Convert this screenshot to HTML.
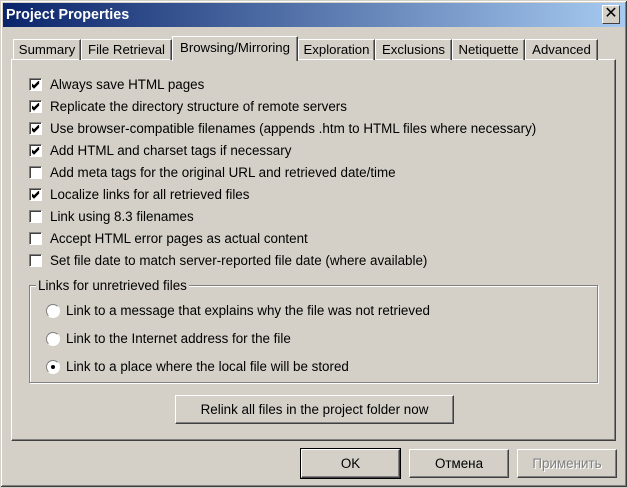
<html><head><style>
body{margin:0;width:628px;height:488px;background:#d4d0c8;font:13.4px "Liberation Sans",Arial,sans-serif;position:relative;overflow:hidden}
.a{position:absolute}
.win{left:0;top:0;width:626px;height:486px;border:1px solid #d4d0c8;box-shadow:inset -1px -1px #404040,inset 1px 1px #fff,inset -2px -2px #808080}
.title{left:3px;top:3px;width:622px;height:24px;background:linear-gradient(90deg,#0a246a,#a6caf0);color:#fff;font-weight:bold;font-size:14.3px;line-height:24px;text-indent:3px}
.close{left:602px;top:5px;width:16px;height:17px;background:#d4d0c8;border:1px solid;border-color:#fff #404040 #404040 #fff;color:#000;font-size:16px;line-height:16px;text-align:center}
.tab{top:39px;height:20px;border:1px solid;border-color:#fff #404040 transparent #fff;border-bottom:none;line-height:20px;text-align:center;color:#000;box-shadow:inset -1px 0 #808080;font-size:13.2px}
.panel{left:11px;top:59px;width:603px;height:380px;border:1px solid;border-color:#fff #404040 #404040 #fff;box-shadow:inset -1px -1px #808080}
.cb{left:29px;width:11px;height:11px;background:#fff;border:1px solid;border-color:#808080 #fff #fff #808080;box-shadow:inset 1px 1px #404040}
.cb svg{position:absolute;left:2px;top:2px}
.lbl{left:50px}
.rb{left:46px;width:12px;height:12px;border-radius:50%;background:#fff;border:1px solid;border-color:#808080 #fff #fff #808080}
.btn{height:27px;border:1px solid;border-color:#fff #404040 #404040 #fff;box-shadow:inset -1px -1px #808080;text-align:center;line-height:27px}
</style></head><body>
<div class="a win"></div>
<div class="a title">Project Properties</div>
<div class="a close">✕</div>
<div class="a panel"></div>
<div class="a tab" style="left:13px;width:66px">Summary</div>
<div class="a tab" style="left:81px;width:89px">File Retrieval</div>
<div class="a tab" style="left:298px;width:75px">Exploration</div>
<div class="a tab" style="left:375px;width:75px">Exclusions</div>
<div class="a tab" style="left:452px;width:71px">Netiquette</div>
<div class="a tab" style="left:525px;width:71px">Advanced</div>
<div class="a tab" style="left:172px;top:36px;width:124px;height:24px;background:#d4d0c8;line-height:22px">Browsing/Mirroring</div>

<div class="a cb" style="top:78px"><svg width="8" height="8"><path d="M0 3L2 5L7 0M0 4L2 6L7 1M0 5L2 7L7 2" stroke="#000" fill="none"/></svg></div><div class="a lbl" style="top:77px">Always save HTML pages</div>
<div class="a cb" style="top:100px"><svg width="8" height="8"><path d="M0 3L2 5L7 0M0 4L2 6L7 1M0 5L2 7L7 2" stroke="#000" fill="none"/></svg></div><div class="a lbl" style="top:99px">Replicate the directory structure of remote servers</div>
<div class="a cb" style="top:122px"><svg width="8" height="8"><path d="M0 3L2 5L7 0M0 4L2 6L7 1M0 5L2 7L7 2" stroke="#000" fill="none"/></svg></div><div class="a lbl" style="top:121px">Use browser-compatible filenames (appends .htm to HTML files where necessary)</div>
<div class="a cb" style="top:144px"><svg width="8" height="8"><path d="M0 3L2 5L7 0M0 4L2 6L7 1M0 5L2 7L7 2" stroke="#000" fill="none"/></svg></div><div class="a lbl" style="top:143px">Add HTML and charset tags if necessary</div>
<div class="a cb" style="top:166px"></div><div class="a lbl" style="top:165px">Add meta tags for the original URL and retrieved date/time</div>
<div class="a cb" style="top:188px"><svg width="8" height="8"><path d="M0 3L2 5L7 0M0 4L2 6L7 1M0 5L2 7L7 2" stroke="#000" fill="none"/></svg></div><div class="a lbl" style="top:187px">Localize links for all retrieved files</div>
<div class="a cb" style="top:210px"></div><div class="a lbl" style="top:209px">Link using 8.3 filenames</div>
<div class="a cb" style="top:232px"></div><div class="a lbl" style="top:231px">Accept HTML error pages as actual content</div>
<div class="a cb" style="top:254px"></div><div class="a lbl" style="top:253px">Set file date to match server-reported file date (where available)</div>

<div class="a" style="left:29px;top:285px;width:567px;height:96px;border:1px solid #808080;box-shadow:1px 1px #fff,inset 1px 1px #fff"></div>
<div class="a" style="left:36px;top:278px;background:#d4d0c8;padding:0 2px">Links for unretrieved files</div>
<div class="a rb" style="top:304px"></div><div class="a" style="left:66px;top:303px">Link to a message that explains why the file was not retrieved</div>
<div class="a rb" style="top:332px"></div><div class="a" style="left:66px;top:331px">Link to the Internet address for the file</div>
<div class="a rb" style="top:360px"><div class="a" style="left:4px;top:4px;width:4px;height:4px;border-radius:50%;background:#000"></div></div><div class="a" style="left:66px;top:359px">Link to a place where the local file will be stored</div>

<div class="a btn" style="left:175px;top:395px;width:277px">Relink all files in the project folder now</div>
<div class="a btn" style="left:301px;top:449px;width:97px;height:27px;outline:1px solid #000">OK</div>
<div class="a btn" style="left:409px;top:449px;width:98px">Отмена</div>
<div class="a btn" style="left:517px;top:449px;width:98px;color:#808080;text-shadow:1px 1px #fff">Применить</div>
</body></html>
